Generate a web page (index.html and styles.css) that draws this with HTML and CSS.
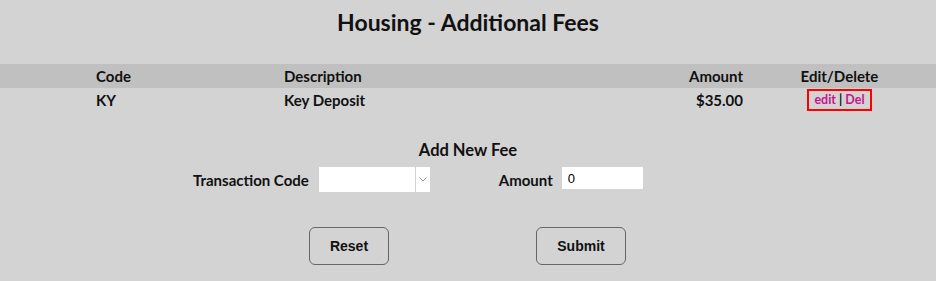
FILE: index.html
```html
<!DOCTYPE html>
<html lang="en">
<head>
  <meta charset="UTF-8" />
  <title>Housing - Additional Fees</title>
  <link rel="stylesheet" href="styles.css">
</head>
<body>

  <h2>Housing - Additional Fees</h2>

  <div class="fee-table">
    <div class="fee-row head">
      <div>Code</div>
      <div>Description</div>
      <div class="amount">Amount</div>
      <div class="actions">Edit/Delete</div>
    </div>
    <div class="fee-row">
      <div>KY</div>
      <div>Key Deposit</div>
      <div class="amount">$35.00</div>
      <div class="actions"><span class="links"><a href="#">edit</a> | <a href="#">Del</a></span></div>
    </div>
  </div>

  <form onsubmit="event.preventDefault()">
    <h3>Add New Fee</h3>
    <div class="field-row">
      <label for="trans_code">Transaction Code</label>
      <div class="select-wrap">
        <select id="trans_code" name="trans_code">
          <option value=""></option>
        </select>
        <span class="select-arrow">
          <svg width="8" height="5" viewBox="0 0 8 5"><path d="M0.5 0.5 L4 4 L7.5 0.5" fill="none" stroke="#999" stroke-width="1"/></svg>
        </span>
      </div>
      <label for="amount" class="amount-label">Amount</label>
      <input type="text" id="amount" name="amount" value="0">
    </div>
    <div class="button-row">
      <button type="reset" class="btn-reset">Reset</button>
      <button type="submit" class="btn-submit">Submit</button>
    </div>
  </form>

</body>
</html>
```

FILE: styles.css
```css
body {
  font-family: Lato, "Open Sans", sans-serif;
  background: #d3d3d3;
  color: #111;
  margin: 0;
}

h2 {
  text-align: center;
  font-size: 23px;
  margin: 0;
  padding-top: 8px;
  height: 64px;
  box-sizing: border-box;
}

.fee-table {
  font-size: 15px;
  font-weight: bold;
}

.fee-row {
  display: grid;
  grid-template-columns: 188px 1fr 100px 193px;
  padding-left: 96px;
  height: 24px;
  align-items: center;
}

.fee-row.head {
  background: #c0c0c0;
}

.amount {
  text-align: right;
}

.actions {
  text-align: center;
}

.links {
  display: inline-block;
  border: 2px solid #ff0000;
  padding: 1px 5px 2px;
  font-size: 12.5px;
}

.links a {
  color: #c8148c;
  text-decoration: none;
}

form {
  margin-top: 28px;
}

h3 {
  text-align: center;
  font-size: 16.5px;
  margin: 0 0 7px;
}

.field-row {
  display: flex;
  align-items: center;
  margin-left: 193px;
  font-size: 15px;
  font-weight: bold;
}

.field-row label {
  margin-right: 10px;
}

.field-row .amount-label {
  margin-right: 9px;
}

.select-wrap {
  position: relative;
  width: 111px;
  height: 25px;
  margin-right: 69px;
}

select {
  appearance: none;
  width: 111px;
  height: 25px;
  border: none;
  border-radius: 0;
  background: white;
}

.select-arrow {
  position: absolute;
  top: 0;
  right: 0;
  width: 14px;
  height: 25px;
  border-left: 1px solid #d0d0d0;
  display: flex;
  align-items: center;
  justify-content: center;
  pointer-events: none;
}

input {
  align-self: flex-start;
  width: 81px;
  height: 22px;
  border: none;
  padding: 0 6px;
  box-sizing: border-box;
  font-family: "Liberation Sans", Arial, sans-serif;
  font-size: 13px;
  color: #000;
}

.button-row {
  display: flex;
  margin-top: 35px;
  margin-left: 309px;
  gap: 147px;
}

button {
  height: 38px;
  background: #d3d3d3;
  border: 1px solid #666;
  border-radius: 6px;
  font-family: "Liberation Sans", Arial, sans-serif;
  font-size: 14px;
  font-weight: bold;
  color: #111;
}

.btn-reset {
  width: 80px;
}

.btn-submit {
  width: 90px;
}
```
